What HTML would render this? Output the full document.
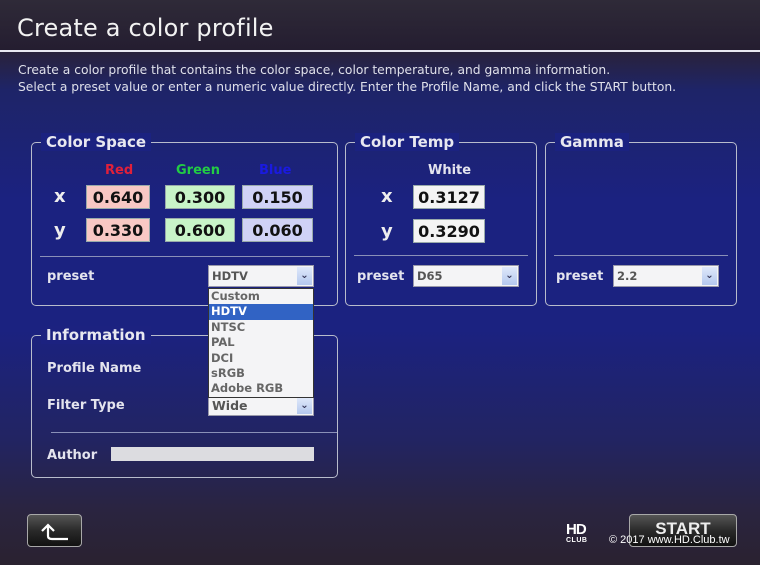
<!DOCTYPE html>
<html><head><meta charset="utf-8"><style>
*{margin:0;padding:0;box-sizing:border-box}
body{width:760px;height:565px;overflow:hidden;position:relative;font-family:"DejaVu Sans","Liberation Sans",sans-serif;color:#fff;
background:linear-gradient(180deg,#2b2336 0px,#2a2238 50px,#1e2468 90px,#1b2280 200px,#1b2280 330px,#222462 440px,#2a2440 510px,#2a2230 565px);}
.a{position:absolute}
.hdr{left:0;top:0;width:760px;height:51px;background:linear-gradient(180deg,#2f2a38,#241d30)}
.line{left:0;top:50px;width:760px;height:1.5px;background:#e8e8f0}
h1{position:absolute;left:17px;top:14px;font-weight:normal;font-size:24px;color:#f2f2f2;letter-spacing:0.2px}
.desc{left:18px;top:62px;font-size:12.3px;line-height:17px;color:#dfe0ea;white-space:nowrap}
.box{position:absolute;border:1.5px solid #b8bccc;border-radius:5px}
.ttl{position:absolute;top:-10px;left:9px;padding:0 5px;font-weight:bold;font-size:15px;color:#e8e8f0;background:#1b2280;line-height:18px}
.lbl{position:absolute;font-weight:bold;font-size:13px;color:#e4e4ee}
.big{position:absolute;font-weight:bold;font-size:18px;color:#eee}
.in{position:absolute;height:24px;font-weight:bold;font-size:16px;color:#111;text-align:center;line-height:24px;border:1px solid #9aa}
.sep{position:absolute;height:1px;background:#8a90b8}
.sel{position:absolute;height:22px;background:#f4f4f6;border:1px solid #99a;font-weight:bold;font-size:11.5px;color:#555;line-height:20px;padding-left:3px}
.sel i{position:absolute;right:1px;top:1px;width:15px;height:18px;background:linear-gradient(#dfe8fa,#b4c8ee);font-style:normal;color:#335;font-size:10px;text-align:center;line-height:18px}
.dd{left:208px;top:288px;width:106px;height:110px;background:#f4f4f6;border:1px solid #333;font-weight:bold;font-size:11.5px;color:#666}
.dd div{height:15.4px;line-height:15px;padding-left:2px}
.dd .h{background:#3163c4;color:#fff}
.btn{position:absolute;border:1.5px solid #a8a8a8;border-radius:4px;background:linear-gradient(180deg,#555 0%,#2a2a2a 50%,#111 100%)}
</style></head><body>
<div class="a hdr"></div>
<h1>Create a color profile</h1>
<div class="a line"></div>
<div class="a desc">Create a color profile that contains the color space, color temperature, and gamma information.<br>Select a preset value or enter a numeric value directly. Enter the Profile Name, and click the START button.</div>

<div class="box" style="left:31px;top:142px;width:307px;height:164px"><div class="ttl">Color Space</div></div>
<div class="lbl" style="left:105px;top:163px;color:#e0203a">Red</div>
<div class="lbl" style="left:176px;top:163px;color:#22cc44">Green</div>
<div class="lbl" style="left:259px;top:163px;color:#1a1ae0">Blue</div>
<div class="big" style="left:54px;top:186px">x</div>
<div class="big" style="left:54px;top:220px">y</div>
<div class="in" style="left:86px;top:185px;width:64px;background:#f8c8c4">0.640</div>
<div class="in" style="left:165px;top:185px;width:70px;background:#c8f4c8">0.300</div>
<div class="in" style="left:242px;top:185px;width:71px;background:#d0d2f6">0.150</div>
<div class="in" style="left:86px;top:218px;width:64px;background:#f8c8c4">0.330</div>
<div class="in" style="left:165px;top:218px;width:70px;background:#c8f4c8">0.600</div>
<div class="in" style="left:242px;top:218px;width:71px;background:#d0d2f6">0.060</div>
<div class="sep" style="left:40px;top:256px;width:290px"></div>
<div class="lbl" style="left:47px;top:269px">preset</div>
<div class="sel" style="left:208px;top:265px;width:106px">HDTV<i>&#8964;</i></div>

<div class="box" style="left:345px;top:142px;width:192px;height:164px"><div class="ttl">Color Temp</div></div>
<div class="lbl" style="left:428px;top:163px">White</div>
<div class="big" style="left:381px;top:186px">x</div>
<div class="big" style="left:381px;top:221px">y</div>
<div class="in" style="left:413px;top:185px;width:72px;background:#f4f4f4">0.3127</div>
<div class="in" style="left:413px;top:219px;width:72px;background:#f4f4f4">0.3290</div>
<div class="sep" style="left:354px;top:255px;width:174px"></div>
<div class="lbl" style="left:357px;top:269px">preset</div>
<div class="sel" style="left:413px;top:265px;width:106px">D65<i>&#8964;</i></div>

<div class="box" style="left:545px;top:142px;width:192px;height:164px"><div class="ttl">Gamma</div></div>
<div class="sep" style="left:554px;top:255px;width:174px"></div>
<div class="lbl" style="left:556px;top:269px">preset</div>
<div class="sel" style="left:613px;top:265px;width:106px">2.2<i>&#8964;</i></div>

<div class="box" style="left:31px;top:335px;width:307px;height:143px"><div class="ttl" style="background:#1c2280">Information</div></div>
<div class="lbl" style="left:47px;top:361px">Profile Name</div>
<div class="lbl" style="left:47px;top:398px">Filter Type</div>
<div class="sel" style="left:208px;top:396px;width:106px;height:20px;line-height:18px;font-size:12.5px">Wide<i style="height:16px;line-height:16px">&#8964;</i></div>
<div class="sep" style="left:51px;top:432px;width:286px"></div>
<div class="lbl" style="left:47px;top:448px">Author</div>
<div class="a" style="left:111px;top:447px;width:203px;height:14px;background:#dcdce0"></div>

<div class="a dd"><div>Custom</div><div class="h">HDTV</div><div>NTSC</div><div>PAL</div><div>DCI</div><div>sRGB</div><div>Adobe RGB</div></div>

<div class="btn" style="left:27px;top:514px;width:55px;height:33px">
<svg width="52" height="30" viewBox="0 0 52 30" style="position:absolute;left:0;top:0"><path d="M20 21 V11 M14 16 L20 10 L26 16 M20 21 Q20 24 24 24 H40" stroke="#fff" stroke-width="2.2" fill="none"/></svg></div>
<div class="btn" style="left:629px;top:514px;width:108px;height:33px;text-align:center;font-family:'Liberation Sans',sans-serif;font-weight:bold;font-size:17px;line-height:28px;color:#eee">START</div>
<div class="a" style="left:566px;top:523px;font-family:'Liberation Sans',sans-serif;font-weight:bold;font-size:15px;line-height:14px;color:#fff;letter-spacing:-1px">HD</div>
<div class="a" style="left:566px;top:537px;font-family:'Liberation Sans',sans-serif;font-weight:bold;font-size:7px;color:#fff;letter-spacing:0.5px">CLUB</div>
<div class="a" style="left:609px;top:534px;font-family:'Liberation Sans',sans-serif;font-size:11px;color:#fff">© 2017 www.HD.Club.tw</div>
</body></html>
